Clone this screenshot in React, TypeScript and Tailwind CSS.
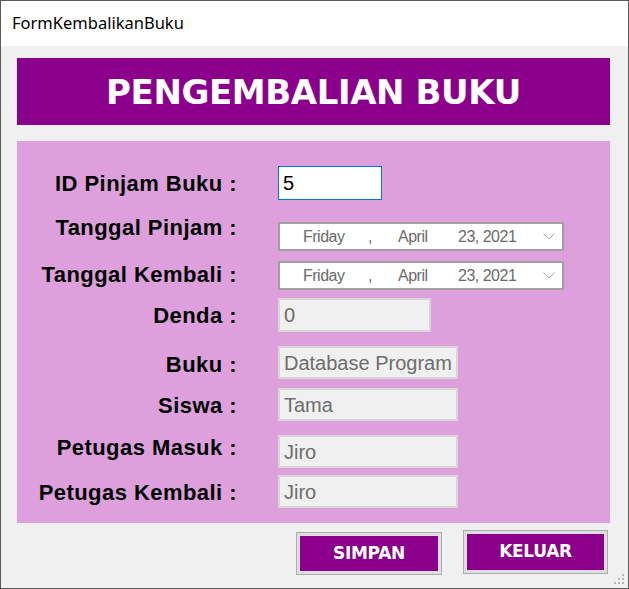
const label = "w-[220px] text-right font-['Liberation_Sans',Arial,sans-serif] font-bold text-[22px] leading-[22px] tracking-[0.45px] text-black whitespace-nowrap";
const readonlyBox =
  "ml-[41px] h-[33px] w-[180px] flex items-center pl-[4px] border-2 border-[#d6d6d6] bg-[#f0f0f0] text-[20px] text-[#6d6d6d] font-['Liberation_Sans',Arial,sans-serif] whitespace-nowrap overflow-hidden";

function DatePicker() {
  return (
    <div className="ml-[41px] h-[29px] w-[286px] flex items-center border-2 border-[#a0a0a0] bg-white pl-[23px] text-[16px] tracking-[-0.5px] text-[#6b6b6b] font-['Liberation_Sans',Arial,sans-serif] whitespace-nowrap">
      <span className="w-[65px]">Friday</span>
      <span className="w-[30px]">,</span>
      <span className="w-[60px]">April</span>
      <span>23, 2021</span>
      <svg viewBox="0 0 12 7" className="ml-auto mr-[7px] w-[12px] h-[7px]">
        <path d="M0.5 0.5 L6 6 L11.5 0.5" fill="none" stroke="#a8a8a8" strokeWidth="1" />
      </svg>
    </div>
  );
}

function FormButton({ text, className }: { text: string; className: string }) {
  return (
    <div className={`border border-[#adadad] bg-[#dedede] p-[3px] ${className}`}>
      <div className="h-full w-full bg-[#8b008b] flex items-center justify-center text-white font-['DejaVu_Sans',Verdana,sans-serif] font-bold text-[17px] tracking-[-0.3px]">
        {text}
      </div>
    </div>
  );
}

export default function App() {
  return (
    <div className="relative w-[629px] h-[589px] border border-[#5a5a5a] bg-[#f0f0f0] flex flex-col overflow-hidden">
      {/* title bar */}
      <div className="h-[45px] bg-white flex items-center pl-[11px] font-['Noto_Sans','Open_Sans',sans-serif] text-[16.5px] text-black">
        FormKembalikanBuku
      </div>

      <div className="pl-[16px]">
        {/* header */}
        <div className="mt-[12px] h-[67px] w-[593px] bg-[#8b008b] flex items-center justify-center">
          <span className="font-['DejaVu_Sans',Verdana,sans-serif] font-bold text-[34px] tracking-[-0.4px] leading-none text-white">
            PENGEMBALIAN BUKU
          </span>
        </div>

        {/* form panel */}
        <div className="mt-[16px] h-[382px] w-[593px] bg-[#dda0dd] pt-[25px] flex flex-col">
          <div className="flex items-start">
            <div className={`${label} mt-[7px]`}>ID Pinjam Buku :</div>
            <div className="ml-[41px] h-[34px] w-[104px] flex items-center pl-[4px] border border-[#0078d7] bg-white text-[20px] text-black font-['Liberation_Sans',Arial,sans-serif]">
              5
            </div>
          </div>

          <div className="flex items-start mt-[17px]">
            <div className={label}>Tanggal Pinjam :</div>
            <div className="mt-[5px]">
              <DatePicker />
            </div>
          </div>

          <div className="flex items-start mt-[10px]">
            <div className={`${label} mt-[3px]`}>Tanggal Kembali :</div>
            <DatePicker />
          </div>

          <div className="flex items-start mt-[8px]">
            <div className={`${label} mt-[7px]`}>Denda :</div>
            <div className={`${readonlyBox} !w-[153px] !h-[34px]`}>0</div>
          </div>

          <div className="flex items-start mt-[14px]">
            <div className={`${label} mt-[8px]`}>Buku :</div>
            <div className={readonlyBox}>Database Program</div>
          </div>

          <div className="flex items-start mt-[9px]">
            <div className={`${label} mt-[7px]`}>Siswa :</div>
            <div className={readonlyBox}>Tama</div>
          </div>

          <div className="flex items-start mt-[14px]">
            <div className={`${label} mt-[2px]`}>Petugas Masuk :</div>
            <div className={readonlyBox}>Jiro</div>
          </div>

          <div className="flex items-start mt-[7px]">
            <div className={`${label} mt-[7px]`}>Petugas Kembali :</div>
            <div className={readonlyBox}>Jiro</div>
          </div>
        </div>

        {/* buttons */}
        <div className="flex items-start mt-[7px] ml-[279px]">
          <FormButton text="SIMPAN" className="mt-[2px] w-[146px] h-[43px]" />
          <FormButton text="KELUAR" className="ml-[21px] w-[145px] h-[44px]" />
        </div>
      </div>

      {/* resize grip */}
      <svg viewBox="0 0 12 12" className="absolute right-[3px] bottom-[3px] w-[12px] h-[12px]">
        {[
          [9, 1],
          [5, 5],
          [9, 5],
          [1, 9],
          [5, 9],
          [9, 9],
        ].map(([x, y]) => (
          <rect key={`${x}-${y}`} x={x} y={y} width="2" height="2" fill="#b5b5b5" />
        ))}
      </svg>
    </div>
  );
}
